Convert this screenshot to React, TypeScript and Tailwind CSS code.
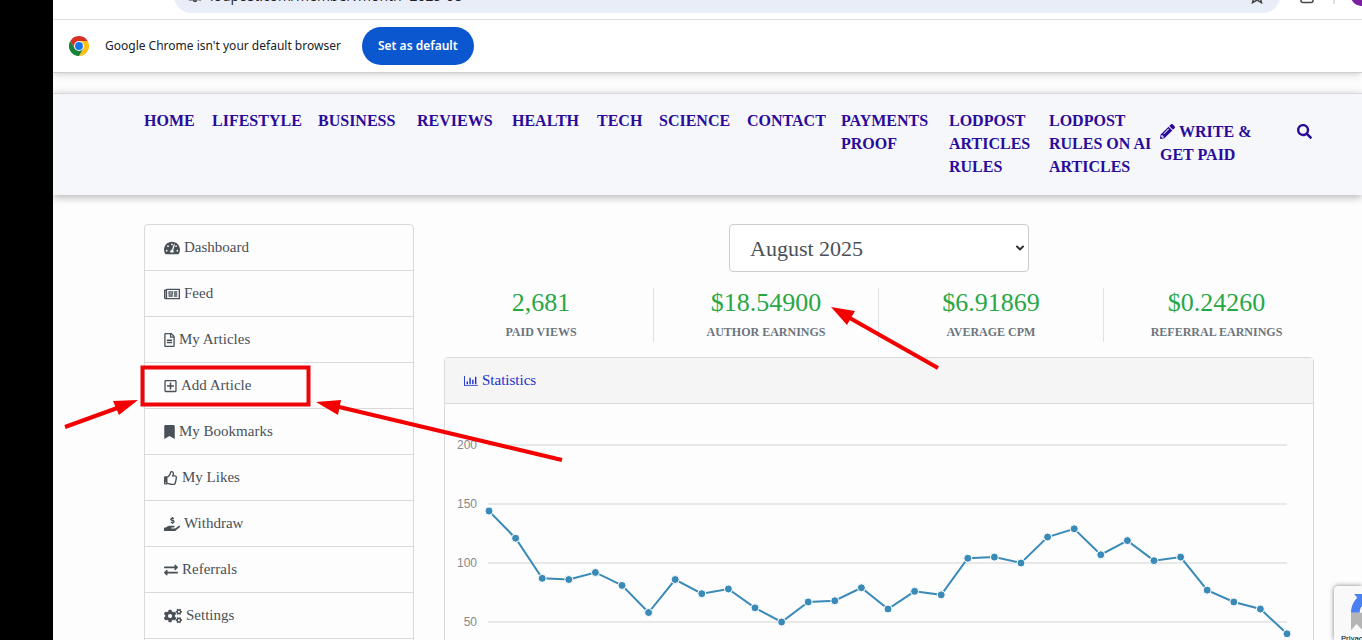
import type { ReactNode } from 'react';
import {
  FaBookmark,
  FaCogs,
  FaExchangeAlt,
  FaHandHoldingUsd,
  FaPencilAlt,
  FaRegFileAlt,
  FaRegNewspaper,
  FaRegPlusSquare,
  FaRegThumbsUp,
  FaSearch,
  FaTachometerAlt,
} from 'react-icons/fa';
import { ChevronDown } from 'lucide-react';

const NAV_ITEMS = [
  'HOME',
  'LIFESTYLE',
  'BUSINESS',
  'REVIEWS',
  'HEALTH',
  'TECH',
  'SCIENCE',
  'CONTACT',
  'PAYMENTS PROOF',
  'LODPOST ARTICLES RULES',
  'LODPOST RULES ON AI ARTICLES',
];

const MENU: { label: string; icon: ReactNode }[] = [
  { label: 'Dashboard', icon: <FaTachometerAlt size={16} /> },
  { label: 'Feed', icon: <FaRegNewspaper size={16} /> },
  { label: 'My Articles', icon: <FaRegFileAlt size={14} className="w-[11px]" /> },
  { label: 'Add Article', icon: <FaRegPlusSquare size={14} className="w-[13px]" /> },
  { label: 'My Bookmarks', icon: <FaBookmark size={14} className="w-[11px]" /> },
  { label: 'My Likes', icon: <FaRegThumbsUp size={14} /> },
  { label: 'Withdraw', icon: <FaHandHoldingUsd size={16} /> },
  { label: 'Referrals', icon: <FaExchangeAlt size={14} /> },
  { label: 'Settings', icon: <FaCogs size={18} /> },
];

const STATS = [
  { value: '2,681', label: 'PAID VIEWS' },
  { value: '$18.54900', label: 'AUTHOR EARNINGS' },
  { value: '$6.91869', label: 'AVERAGE CPM' },
  { value: '$0.24260', label: 'REFERRAL EARNINGS' },
];

const VIEWS = [
  144, 121, 87, 86, 92, 81, 58, 86, 74, 78, 62, 50, 67, 68, 79, 61,
  76, 73, 104, 105, 100, 122, 129, 107, 119, 102, 105, 77, 67, 61, 40,
];

function ChromeLogo() {
  return (
    <svg viewBox="0 0 48 48" className="size-5" aria-hidden="true">
      <path fill="#d93025" d="M3.2 12A24 24 0 0 1 44.8 12H24L13.6 30z" />
      <path fill="#fbc116" d="M44.8 12A24 24 0 0 1 24 48L34.4 30 24 12z" />
      <path fill="#188038" d="M24 48A24 24 0 0 1 3.2 12L13.6 30H34.4z" />
      <circle cx="24" cy="24" r="12" fill="#fff" />
      <circle cx="24" cy="24" r="9.5" fill="#1a73e8" />
    </svg>
  );
}

function BrowserBar() {
  return (
    <>
      <div className="flex h-5 items-end border-b border-[#dfe0e3] bg-white pb-1.5">
        <div className="flex w-[121px] shrink-0 items-end self-stretch">
          <svg viewBox="0 0 121 19" className="w-full" fill="none" stroke="#474747" strokeWidth="2" aria-hidden="true">
            <path d="M17-5l6 6" />
            <path d="M62-5l-6 6" stroke="#b5b5b5" />
            <path d="M88-2a6 4 0 0 0 11 0" />
          </svg>
        </div>
        <div className="flex h-[34px] min-w-0 flex-1 items-center rounded-full bg-[#e9edf7] pr-[15px] pl-[14px] text-[#202124]">
          <svg viewBox="0 0 16 16" className="size-3.5" fill="none" stroke="#474747" strokeWidth="2" aria-hidden="true">
            <path d="M1 4h7M12 12h3M1 12h4" />
            <circle cx="12" cy="4" r="2" />
            <circle cx="8" cy="12" r="2" />
          </svg>
          <span className="ml-2 flex-1 font-['Open_Sans',sans-serif] text-sm leading-5">
            lodpost.com/member?month=2025-08
          </span>
          <svg viewBox="0 0 16 16" className="size-4" fill="none" stroke="#474747" strokeWidth="1.5" aria-hidden="true">
            <path d="M8 1l2 4.8 5.2.4-4 3.4 1.3 5.1L8 12l-4.5 2.7 1.300-5.100-4-3.400L6 5.800z" />
          </svg>
        </div>
        <div className="flex h-[34px] w-[82px] shrink-0 items-center">
          <svg viewBox="0 0 82 34" className="w-full" fill="none" aria-hidden="true">
            <path d="M21 14v7.500q0 2 2 2h8q2 0 2-2V14" stroke="#474747" strokeWidth="1.500" />
            <path d="M54 8v17" stroke="#cdd6ea" strokeWidth="1.500" />
            <circle cx="81" cy="17" r="10" fill="#7b1fa2" />
          </svg>
        </div>
      </div>
      <div className="relative flex h-[53px] items-center border-b border-[#cfcfcf] bg-white pl-4 font-['Noto_Sans',sans-serif] text-xs text-[#202124] shadow-md">
        <ChromeLogo />
        <span className="ml-4 min-w-[241px]">Google Chrome isn't your default browser</span>
        <button type="button" className="ml-4 h-[38px] rounded-full bg-[#0b57d0] px-4 font-semibold text-white">
          Set as default
        </button>
      </div>
    </>
  );
}

function SiteNav() {
  return (
    <nav className="mt-5 flex min-h-[102px] border-t border-[#d9dadc] bg-[#f6f7fa] pt-[15px] pl-[91px] text-base leading-[23px] font-bold text-[#2a0a9b] shadow-[0_2px_8px_rgba(0,0,0,0.3)]">
      <ul className="grid grid-cols-[52px_90px_83px_79px_69px_46px_72px_78px_92px_84px_111px] gap-4">
        {NAV_ITEMS.map(item => (
          <li key={item}>
            <a href="#">{item}</a>
          </li>
        ))}
      </ul>
      <a href="#" className="mt-[11px] w-[100px] shrink-0">
        <FaPencilAlt size={15} className="mr-1 inline align-[-2px]" />
        WRITE &amp; GET PAID
      </a>
      <button type="button" aria-label="Search" className="mt-[15px] ml-[37px] self-start">
        <FaSearch size={15} />
      </button>
    </nav>
  );
}

function Sidebar() {
  return (
    <ul className="w-[270px] shrink-0 self-start rounded-t-sm border border-[#d9d9d9] pb-11">
      {MENU.map(({ label, icon }) => (
        <li key={label} className="border-b border-[#d9d9d9]">
          <a href="#" className="flex h-[45px] items-center gap-1 px-[19px] text-[15px] text-[#495057]">
            {icon}
            {label}
          </a>
        </li>
      ))}
    </ul>
  );
}

function Chart() {
  const yOf = (v: number) => 277 - v * 1.18;
  const points = VIEWS.map((v, i) => [44 + i * 26.6, yOf(v)]);
  return (
    <svg viewBox="0 0 868 290" className="w-full" role="img" aria-label="Daily views">
      {[50, 100, 150, 200].map(v => (
        <g key={v}>
          <path d={`M43 ${yOf(v)}H842`} stroke="#e0e0e0" strokeWidth="1.500" />
          <text x="32" y={yOf(v) + 4} textAnchor="end" fontSize="12" fill="#888" className="font-['Liberation_Sans',sans-serif]">
            {v}
          </text>
        </g>
      ))}
      <polyline points={points.map(p => p.join(',')).join(' ')} fill="none" stroke="#3a8ab8" strokeWidth="2" />
      {points.map(([x, y]) => (
        <circle key={x} cx={x} cy={y} r="4" fill="#3a8ab8" stroke="#fff" />
      ))}
    </svg>
  );
}

function Arrow({ d, head }: { d: string; head: string }) {
  return (
    <g>
      <path d={d} stroke="#f40000" strokeWidth="4" />
      <path d={head} fill="#f40000" />
    </g>
  );
}

// Red marks drawn over the page
function Annotations() {
  return (
    <svg width="1362" height="640" className="pointer-events-none absolute top-0 left-0" fill="none" aria-hidden="true">
      <rect x="142.500" y="367.500" width="166" height="37" stroke="#ee0508" strokeWidth="4" />
      <Arrow d="M65 427L120 407" head="M138 400L113 401L119 415z" />
      <Arrow d="M562 460L335 406" head="M316 402L341 400L338 415z" />
      <Arrow d="M938 368L848 317" head="M831 307L855 311L847 325z" />
    </svg>
  );
}

export default function App() {
  return (
    <div className="relative flex h-screen overflow-hidden bg-[#fdfdfd] font-['Liberation_Serif',serif]">
      <div className="w-[53px] shrink-0 bg-black" />
      <div className="min-w-0 flex-1">
        <BrowserBar />
        <SiteNav />
        <main className="mt-[29px] flex gap-[30px] pr-12 pl-[91px]">
          <Sidebar />
          <section className="min-w-0 flex-1">
            <div className="relative mx-auto w-[300px]">
              <select
                aria-label="Month"
                className="h-12 w-full appearance-none rounded border border-[#ccc] bg-white px-5 text-[22px] text-[#495057]"
              >
                <option>August 2025</option>
              </select>
              <ChevronDown size={12} strokeWidth={4} className="pointer-events-none absolute top-[18px] right-[3px] text-[#333]" />
            </div>
            <dl className="mt-4 -mr-[15px] -ml-[15px] grid grid-cols-4 divide-x divide-[#dee2e6] text-center">
              {STATS.map(({ value, label }) => (
                <div key={label} className="flex h-[54px] flex-col-reverse justify-end">
                  <dt className="mt-1 text-xs leading-5 font-bold text-[#6c757d]">{label}</dt>
                  <dd className="text-[26px] leading-[30px] text-[#28a745]">{value}</dd>
                </div>
              ))}
            </dl>
            <div className="mt-[15px] rounded-sm border border-[#d9d9d9]">
              <h2 className="flex h-[46px] items-center gap-1 border-b border-[#d9d9d9] bg-[#f5f5f5] px-[19px] text-[15px] text-[#1a2fd0]">
                <svg viewBox="0 0 15 12" className="w-3.5" fill="none" stroke="currentColor" aria-hidden="true">
                  <path d="M.500 1V11.500H15" />
                  <path d="M3.500 7v3M6.500 3v7M9.500 5v5M12.500 2v8" strokeWidth="1.500" />
                </svg>
                <a href="#">Statistics</a>
              </h2>
              <Chart />
            </div>
          </section>
        </main>
      </div>

      {/* reCAPTCHA badge */}
      <div className="absolute right-0 bottom-0 h-[54px] w-7 overflow-hidden rounded-tl-sm bg-[#f9f9f9] shadow-[0_0_5px_#808080]">
        <svg viewBox="0 0 64 64" className="mt-2 ml-[17px] size-10 max-w-none" aria-hidden="true">
          <path fill="#4a80f0" d="M0 30C0 20 4 12 10 6L5 0H32V20L20 18C15 21 14 25 14 30z" />
          <path fill="#b5b5b5" d="M0 30H32V60H20L9 48L0 58z" />
        </svg>
        <span className="absolute top-[47px] left-[7px] font-['Roboto',sans-serif] text-[8px] leading-3 text-black">
          Privacy
        </span>
      </div>

      <Annotations />
    </div>
  );
}
